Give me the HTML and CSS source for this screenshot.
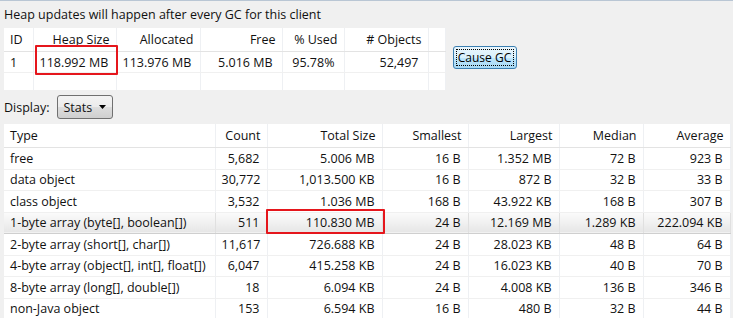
FILE: index.html
```html
<!DOCTYPE html>
<html lang="en">
<head>
    <meta charset="UTF-8">
    <title>Heap</title>
    <link rel="stylesheet" href="styles.css">
</head>
<body>
    <div class="panel">
        <!-- header note -->
        <div class="note">Heap updates will happen after every GC for this client</div>

        <!-- heap summary + GC button -->
        <div class="summary">
            <table class="grid heap">
                <colgroup>
                    <col style="width: 29px"><col style="width: 83px"><col style="width: 84px"><col style="width: 82px">
                    <col style="width: 62px"><col style="width: 84px"><col style="width: 17px">
                </colgroup>
                <thead>
                    <tr><th class="left">ID</th><th>Heap Size</th><th>Allocated</th><th>Free</th><th>% Used</th><th># Objects</th><th></th></tr>
                </thead>
                <tbody>
                    <tr><td class="left">1</td><td class="marked heap-mark">118.992 MB</td><td>113.976 MB</td><td>5.016 MB</td><td>95.78%</td><td>52,497</td><td></td></tr>
                    <tr class="blank"><td></td><td></td><td></td><td></td><td></td><td></td><td></td></tr>
                </tbody>
            </table>
            <button class="gc-button"><span>Cause GC</span></button>
        </div>

        <!-- display selector -->
        <div class="display-row">
            <span class="display-label">Display:</span>
            <div class="select">
                <span>Stats</span>
                <svg width="7" height="4" viewBox="0 0 7 4"><path d="M0 0h7L3.5 4z" fill="#000"/></svg>
            </div>
        </div>

        <!-- stats table -->
        <table class="grid stats">
            <colgroup>
                <col style="width: 211px"><col style="width: 52px"><col style="width: 115px"><col style="width: 86px">
                <col style="width: 91px"><col style="width: 84px"><col style="width: 87px">
            </colgroup>
            <thead>
                <tr><th class="left">Type</th><th>Count</th><th>Total Size</th><th>Smallest</th><th>Largest</th><th>Median</th><th>Average</th></tr>
            </thead>
            <tbody>
                <tr><td class="left">free</td><td>5,682</td><td>5.006 MB</td><td>16 B</td><td>1.352 MB</td><td>72 B</td><td>923 B</td></tr>
                <tr><td class="left">data object</td><td>30,772</td><td>1,013.500 KB</td><td>16 B</td><td>872 B</td><td>32 B</td><td>33 B</td></tr>
                <tr><td class="left">class object</td><td>3,532</td><td>1.036 MB</td><td>168 B</td><td>43.922 KB</td><td>168 B</td><td>307 B</td></tr>
                <tr class="selected"><td class="left">1-byte array (byte[], boolean[])</td><td>511</td><td class="marked size-mark">110.830 MB</td><td>24 B</td><td>12.169 MB</td><td>1.289 KB</td><td>222.094 KB</td></tr>
                <tr><td class="left">2-byte array (short[], char[])</td><td>11,617</td><td>726.688 KB</td><td>24 B</td><td>28.023 KB</td><td>48 B</td><td>64 B</td></tr>
                <tr><td class="left">4-byte array (object[], int[], float[])</td><td>6,047</td><td>415.258 KB</td><td>24 B</td><td>16.023 KB</td><td>40 B</td><td>70 B</td></tr>
                <tr><td class="left">8-byte array (long[], double[])</td><td>18</td><td>6.094 KB</td><td>24 B</td><td>4.008 KB</td><td>136 B</td><td>346 B</td></tr>
                <tr><td class="left">non-Java object</td><td>153</td><td>6.594 KB</td><td>16 B</td><td>480 B</td><td>32 B</td><td>44 B</td></tr>
            </tbody>
        </table>
    </div>
</body>
</html>
```

FILE: styles.css
```css
body {
    margin: 0;
    background: #f0f0f0;
    font-family: "Open Sans", "Noto Sans", sans-serif;
    font-size: 12.5px;
    color: #111;
    overflow: hidden;
}
.panel {
    border-top: 1px solid #b9c6d4;
    padding: 0 0 0 4px;
}
.note {
    height: 27px;
    line-height: 27px;
    white-space: nowrap;
}
.summary {
    display: flex;
    align-items: center;
    gap: 7px;
}
.grid {
    border-collapse: collapse;
    table-layout: fixed;
    background: #fff;
}
.grid th, .grid td {
    text-align: right;
    white-space: nowrap;
    padding: 0 7px 0 6px;
    border-right: 1px solid #eef0f3;
    font-weight: normal;
}
.grid th {
    height: 23px;
    border-bottom: 1px solid #e3e3e3;
    padding-right: 6px;
}
.grid td {
    border-bottom: 1px solid #f0f0f0;
}
.grid .left {
    text-align: left;
}
.heap {
    width: 441px;
}
.heap td {
    height: 20px;
    padding-right: 9px;
}
.heap .blank td {
    height: 17px;
    border-bottom: none;
}
.stats {
    width: 726px;
}
.stats th {
    height: 23px;
}
.stats td {
    height: 20.5px;
}
.stats tr.selected td {
    background: linear-gradient(#fbfbfb, #e6e6e6);
    border-top: 1px solid #d9d9d9;
    border-bottom: 1px solid #cfcfcf;
    border-right-color: #e0e0e0;
}
.marked {
    position: relative;
}
.marked::after {
    content: "";
    position: absolute;
    border: 2px solid #e5161c;
    border-radius: 1px;
}
.heap-mark::after {
    top: -7px;
    bottom: -3px;
    left: 1px;
    right: -2px;
}
.size-mark::after {
    top: -4px;
    bottom: -1px;
    left: -2px;
    right: -3px;
}
.gc-button {
    width: 64px;
    height: 23px;
    margin-top: -4px;
    padding: 2px;
    border: 1px solid #3c7fb1;
    border-radius: 3px;
    background: linear-gradient(#eaf6fd 0%, #d9f0fc 50%, #bee6fd 51%, #a7d9f5 100%);
    font-family: inherit;
    font-size: 12px;
    color: #000;
    white-space: nowrap;
}
.gc-button span {
    display: block;
    box-sizing: border-box;
    height: 100%;
    line-height: 15px;
    border: 1px dotted #000;
}
.display-row {
    display: flex;
    align-items: center;
    gap: 8px;
    height: 24px;
    margin: 5px 0 5px;
}
.select {
    display: flex;
    align-items: center;
    justify-content: space-between;
    box-sizing: border-box;
    width: 56px;
    height: 24px;
    padding: 0 6px 0 5px;
    border: 1px solid #707070;
    border-radius: 3px;
    background: linear-gradient(#f3f3f3 0%, #ebebeb 50%, #dddddd 51%, #cfcfcf 100%);
}
```
